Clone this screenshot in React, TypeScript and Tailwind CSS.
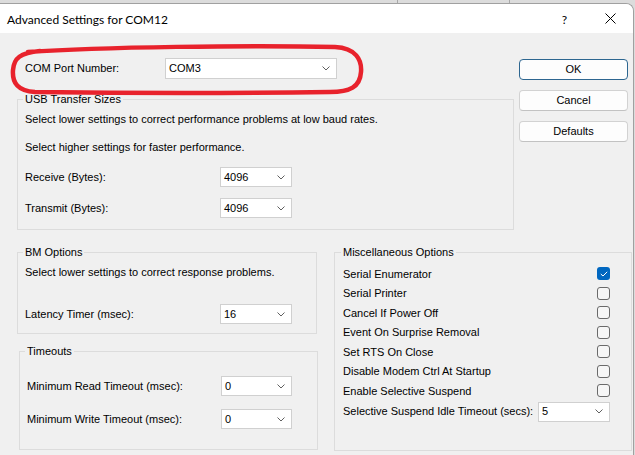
import type { ReactNode } from 'react'

function Chevron() {
  return (
    <svg width="8" height="5" viewBox="0 0 8 5" className="shrink-0">
      <polyline points="0.5,0.5 4,4 7.5,0.5" fill="none" stroke="#606060" strokeWidth="1" />
    </svg>
  )
}

function Select({ value, className }: { value: string; className: string }) {
  return (
    <div
      className={`flex items-center justify-between bg-white border border-[#d0d0d0] pl-[3px] pr-[6px] text-[11px] ${className}`}
    >
      <span>{value}</span>
      <Chevron />
    </div>
  )
}

function Group({ title, className, children }: { title: string; className: string; children: ReactNode }) {
  return (
    <fieldset className={`border border-[#dcdcdc] ${className}`}>
      <legend className="-ml-[2px] px-[2px] leading-[14px]">{title}</legend>
      {children}
    </fieldset>
  )
}

function Checkbox({ checked }: { checked?: boolean }) {
  if (checked) {
    return (
      <div className="w-[13px] h-[13px] rounded-[3px] bg-[#0067c0] flex items-center justify-center">
        <svg width="8" height="6" viewBox="0 0 8 6">
          <polyline points="0.8,3 3,5 7.2,0.8" fill="none" stroke="#ffffff" strokeWidth="1" />
        </svg>
      </div>
    )
  }
  return <div className="w-[13px] h-[13px] rounded-[3px] border border-[#6a6a6a] bg-[#f6f6f6]" />
}

function Button({ label, primary }: { label: string; primary?: boolean }) {
  return (
    <div
      className={`h-[21px] rounded-[4px] flex items-center justify-center bg-[#fdfdfd] border text-[11px] ${
        primary ? 'border-[#2d6690]' : 'border-[#d2d2d2] border-b-[#c2c2c2]'
      }`}
    >
      {label}
    </div>
  )
}

const misc = [
  { label: 'Serial Enumerator', checked: true },
  { label: 'Serial Printer' },
  { label: 'Cancel If Power Off' },
  { label: 'Event On Surprise Removal' },
  { label: 'Set RTS On Close' },
  { label: 'Disable Modem Ctrl At Startup' },
  { label: 'Enable Selective Suspend' },
]

export default function App() {
  return (
    <div className="relative w-[635px] h-[455px] overflow-hidden bg-[#dcdcdc] text-black font-['Liberation_Sans',Arial,sans-serif] text-[11px] flex flex-col">
      {/* window behind */}
      <div className="h-[3px] flex shrink-0">
        <div className="w-[397px]" />
        <div className="w-px bg-[#a8a8a8]" />
        <div className="w-[111px]" />
        <div className="w-px bg-[#a8a8a8]" />
      </div>

      {/* dialog */}
      <div className="w-[634px] flex-1 flex flex-col bg-[#f0f0f0] border-t border-r border-[#a0a0a0] rounded-tr-[8px] overflow-hidden">
        {/* title bar */}
        <div className="h-[29px] shrink-0 bg-white flex items-center pl-[7px] pr-[17px] font-['Lato',sans-serif] text-[12px]">
          <span className="flex-1 pt-[2px]">Advanced Settings for COM12</span>
          <span className="mr-[38px] pt-[2px]">?</span>
          <svg width="11" height="11" viewBox="0 0 11 11">
            <path d="M0.5 0.5 L10.5 10.5 M10.5 0.5 L0.5 10.5" stroke="#000" strokeWidth="1" />
          </svg>
        </div>

        {/* body */}
        <div className="pl-[17px]">
          <div className="flex items-start">
            <div className="w-[497px]">
              <div className="mt-[25px] h-[21px] flex items-center">
                <span className="w-[148px] pl-[8px]">COM Port Number:</span>
                <Select value="COM3" className="w-[172px] h-[21px]" />
              </div>

              <Group title="USB Transfer Sizes" className="mt-[13px] h-[138px] pl-[7px] pt-[6px]">
                <div className="leading-[14px]">Select lower settings to correct performance problems at low baud rates.</div>
                <div className="leading-[14px] mt-[14px]">Select higher settings for faster performance.</div>
                <div className="mt-[13px] h-[20px] flex items-center">
                  <span className="w-[195px]">Receive (Bytes):</span>
                  <Select value="4096" className="w-[72px] h-[20px]" />
                </div>
                <div className="mt-[11px] h-[20px] flex items-center">
                  <span className="w-[195px]">Transmit (Bytes):</span>
                  <Select value="4096" className="w-[72px] h-[20px]" />
                </div>
              </Group>
            </div>

            <div className="ml-[5px] w-[109px] mt-[26px] flex flex-col gap-[10px]">
              <Button label="OK" primary />
              <Button label="Cancel" />
              <Button label="Defaults" />
            </div>
          </div>

          <div className="mt-[15px] flex items-start">
            <div className="w-[301px]">
              <Group title="BM Options" className="w-[300px] h-[89px] pl-[7px] pt-[6px]">
                <div className="leading-[14px]">Select lower settings to correct response problems.</div>
                <div className="mt-[25px] h-[20px] flex items-center">
                  <span className="w-[195px]">Latency Timer (msec):</span>
                  <Select value="16" className="w-[72px] h-[20px]" />
                </div>
              </Group>

              <Group title="Timeouts" className="mt-[10px] ml-[2px] w-[299px] h-[106px] pl-[7px] pt-[18px]">
                <div className="h-[20px] flex items-center">
                  <span className="w-[194px]">Minimum Read Timeout (msec):</span>
                  <Select value="0" className="w-[71px] h-[20px]" />
                </div>
                <div className="mt-[13px] h-[20px] flex items-center">
                  <span className="w-[194px]">Minimum Write Timeout (msec):</span>
                  <Select value="0" className="w-[71px] h-[20px]" />
                </div>
              </Group>
            </div>

            <Group title="Miscellaneous Options" className="ml-[16px] w-[296px] h-[206px] pl-[8px] pr-[21px] pt-[5px]">
              {misc.map((m) => (
                <div key={m.label} className="h-[19.5px] flex items-center justify-between">
                  <span>{m.label}</span>
                  <Checkbox checked={m.checked} />
                </div>
              ))}
              <div className="mt-[1px] h-[20px] flex items-center">
                <span className="w-[195px]">Selective Suspend Idle Timeout (secs):</span>
                <Select value="5" className="w-[72px] h-[20px]" />
              </div>
            </Group>
          </div>
        </div>
      </div>

      {/* red annotation */}
      <svg className="absolute inset-0 pointer-events-none" width="635" height="455" viewBox="0 0 635 455">
        <path
          d="M28 52 C100 47 250 45 335 47 C356 48 362 60 361 72 C360 87 350 92 330 92 C250 93 120 93 35 92 C18 91 12 83 13 70 C14 58 20 53 40 51"
          fill="none"
          stroke="#e8222c"
          strokeWidth="4.5"
          strokeLinecap="round"
        />
      </svg>
    </div>
  )
}
